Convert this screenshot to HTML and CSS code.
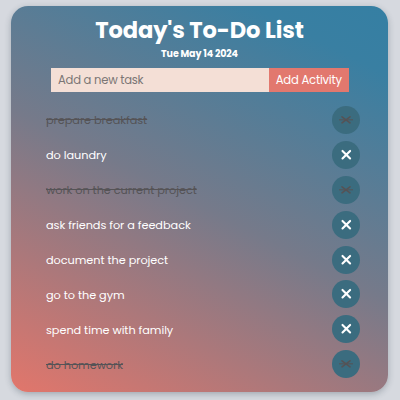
FILE: index.html
```html
<!DOCTYPE html>
<html lang="en">
<head>
<meta charset="utf-8">
<title>Today's To-Do List</title>
<link rel="stylesheet" href="styles.css">
</head>
<body>
<main class="card">
  <h1 class="title">Today's To-Do List</h1>
  <p class="date">Tue May 14 2024</p>
  <form class="add-form">
    <input class="task-input" type="text" placeholder="Add a new task">
    <button class="add-button" type="button">Add Activity</button>
  </form>
  <ul class="tasks">
    <li class="task done"><span class="label">prepare breakfast</span><button class="remove"><svg viewBox="0 0 28 28"><path d="M10 10.8l8 6m0-6l-8 6"/><path class="strike" d="M7 13.8h14"/></svg></button></li>
    <li class="task"><span class="label">do laundry</span><button class="remove"><svg viewBox="0 0 28 28"><path d="M10.5 9.9l7.6 7.6m0-7.6l-7.6 7.6"/></svg></button></li>
    <li class="task done"><span class="label">work on the current project</span><button class="remove"><svg viewBox="0 0 28 28"><path d="M10 10.8l8 6m0-6l-8 6"/><path class="strike" d="M7 13.8h14"/></svg></button></li>
    <li class="task"><span class="label">ask friends for a feedback</span><button class="remove"><svg viewBox="0 0 28 28"><path d="M10.5 9.9l7.6 7.6m0-7.6l-7.6 7.6"/></svg></button></li>
    <li class="task"><span class="label">document the project</span><button class="remove"><svg viewBox="0 0 28 28"><path d="M10.5 9.9l7.6 7.6m0-7.6l-7.6 7.6"/></svg></button></li>
    <li class="task"><span class="label">go to the gym</span><button class="remove"><svg viewBox="0 0 28 28"><path d="M10.5 9.9l7.6 7.6m0-7.6l-7.6 7.6"/></svg></button></li>
    <li class="task"><span class="label">spend time with family</span><button class="remove"><svg viewBox="0 0 28 28"><path d="M10.5 9.9l7.6 7.6m0-7.6l-7.6 7.6"/></svg></button></li>
    <li class="task done"><span class="label">do homework</span><button class="remove"><svg viewBox="0 0 28 28"><path d="M10 10.8l8 6m0-6l-8 6"/><path class="strike" d="M7 13.8h14"/></svg></button></li>
  </ul>
</main>
</body>
</html>
```

FILE: styles.css
```css
* { box-sizing: border-box; }

body {
  margin: 0;
  height: 400px;
  padding: 6px 12px 8px 11px;
  overflow: hidden;
  background: #d6d9df;
  font-family: Poppins, Inter, sans-serif;
}

.card {
  height: 386px;
  padding-top: 7px;
  border-radius: 17px;
  background: linear-gradient(27deg, #e2766b 0%, #767a8a 49%, #397fa2 88%, #357fa3 100%);
  box-shadow: 0 2px 6px rgba(40, 55, 70, 0.3);
}

.title {
  margin: 0;
  color: #fff;
  font-size: 22.6px;
  font-weight: 700;
  letter-spacing: -0.12px;
  line-height: 34px;
  text-align: center;
  white-space: nowrap;
}

.date {
  margin: 0;
  color: #fff;
  font-size: 9.5px;
  font-weight: 700;
  letter-spacing: -0.12px;
  line-height: 13px;
  text-align: center;
}

.add-form {
  display: flex;
  width: 297.5px;
  height: 24px;
  margin: 8px 0 0 40px;
}

.task-input {
  width: 218px;
  padding: 0 7px;
  border: 0;
  border-radius: 0;
  background: #f4dfd6;
  font: 11.6px Poppins, Inter, sans-serif;
  letter-spacing: -0.25px;
}

.task-input::placeholder { color: #7b7675; }

.add-button {
  flex: 1;
  padding: 0;
  border: 0;
  background: #e2786e;
  color: #fff;
  font: 11.6px Poppins, Inter, sans-serif;
  letter-spacing: -0.2px;
}

.tasks {
  display: grid;
  grid-auto-rows: 28px;
  row-gap: 6.9px;
  margin: 14px 28px 0 35px;
  padding: 0;
  list-style: none;
}

.task {
  display: flex;
  align-items: center;
  justify-content: space-between;
  color: #fff;
  font-size: 11.3px;
  letter-spacing: -0.05px;
}

.label {
  padding-top: 1.6px;
  white-space: nowrap;
}

.done { color: #555356; }

.done .label { text-decoration: line-through; }

.remove {
  width: 28px;
  height: 28px;
  padding: 0;
  border: 0;
  border-radius: 50%;
  background: #3b6c7f;
  color: inherit;
}

.remove svg {
  display: block;
  width: 28px;
  height: 28px;
  fill: none;
  stroke: currentColor;
  stroke-width: 2.1;
  stroke-linecap: round;
}

.done .remove svg { stroke-width: 1.6; }

.remove .strike {
  stroke-width: 1;
  stroke-linecap: butt;
}
```
